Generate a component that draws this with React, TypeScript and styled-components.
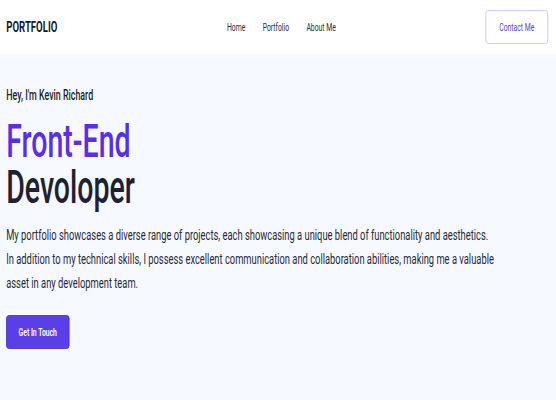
import React from "react";
import styled, { createGlobalStyle } from "styled-components";

const SCALE = 0.62;

const Global = createGlobalStyle`
  html, body { margin: 0; padding: 0; background: #f6f9ff; overflow: hidden; }
  body { font-family: Roboto, "Liberation Sans", Arial, sans-serif; }
  * { box-sizing: border-box; }
`;

const Viewport = styled.div`
  width: 556px;
  height: 400px;
  overflow: hidden;
  background: #f6f9ff;
`;

const Page = styled.div`
  width: ${556 / SCALE}px;
  transform: scaleX(${SCALE});
  transform-origin: 0 0;
`;

const Header = styled.header`
  height: 54px;
  background: #ffffff;
  display: grid;
  grid-template-columns: 1fr auto 1fr;
  align-items: center;
  padding: 0 13px 0 10px;
`;

const Logo = styled.div`
  font-size: 15.5px;
  font-weight: 700;
  color: #161a2c;
`;

const Nav = styled.nav`
  display: flex;
  gap: 28px;
  padding-left: 14px;
`;

const NavLink = styled.a`
  font-size: 11px;
  color: #2a2d3a;
  text-decoration: none;
`;

const Actions = styled.div`
  display: flex;
  justify-content: flex-end;
`;

const Button = styled.button<{ $variant: "outline" | "solid" }>`
  height: 34px;
  padding: 0 ${(p) => (p.$variant === "outline" ? 21 : 19)}px;
  font-family: inherit;
  font-size: 11px;
  border-radius: 4px;
  cursor: pointer;
  ${(p) =>
    p.$variant === "outline"
      ? `background: #ffffff; color: #5a3de6; border: 1.4px solid #c9bdf8; font-weight: 400;`
      : `background: #5b3fe6; color: #ffffff; border: 1.4px solid #4a26db; font-weight: 600;`}
`;

const Hero = styled.section`
  padding: 31px 10px 0 10px;
  display: flex;
  flex-direction: column;
  align-items: flex-start;
`;

const Greeting = styled.p`
  margin: 0;
  font-size: 14.3px;
  line-height: 20px;
  font-weight: 500;
  color: #1b1e2b;
`;

const Title = styled.h1`
  margin: 13px 0 0 0;
  font-size: 46px;
  line-height: 46px;
  font-weight: 500;
  color: #1e2130;
`;

const Accent = styled.span`
  display: block;
  color: #5a2ee8;
`;

const Lead = styled.p`
  margin: 12.5px 0 0 0;
  max-width: 806px;
  font-size: 15.1px;
  line-height: 24px;
  color: #272a36;
`;

const CtaRow = styled.div`
  margin-top: 20.5px;
`;

export default function App() {
  return (
    <Viewport>
      <Global />
      <Page>
        <Header>
          <Logo>PORTFOLIO</Logo>
          <Nav>
            <NavLink href="#">Home</NavLink>
            <NavLink href="#">Portfolio</NavLink>
            <NavLink href="#">About Me</NavLink>
          </Nav>
          <Actions>
            <Button $variant="outline">Contact Me</Button>
          </Actions>
        </Header>
        <Hero>
          <Greeting>Hey, I'm Kevin Richard</Greeting>
          <Title>
            <Accent>Front-End</Accent>
            Devoloper
          </Title>
          <Lead>
            My portfolio showcases a diverse range of projects, each showcasing a unique blend of
            functionality and aesthetics.
            <br />
            In addition to my technical skills, I possess excellent communication and collaboration
            abilities, making me a valuable asset in any development team.
          </Lead>
          <CtaRow>
            <Button $variant="solid">Get In Touch</Button>
          </CtaRow>
        </Hero>
      </Page>
    </Viewport>
  );
}
